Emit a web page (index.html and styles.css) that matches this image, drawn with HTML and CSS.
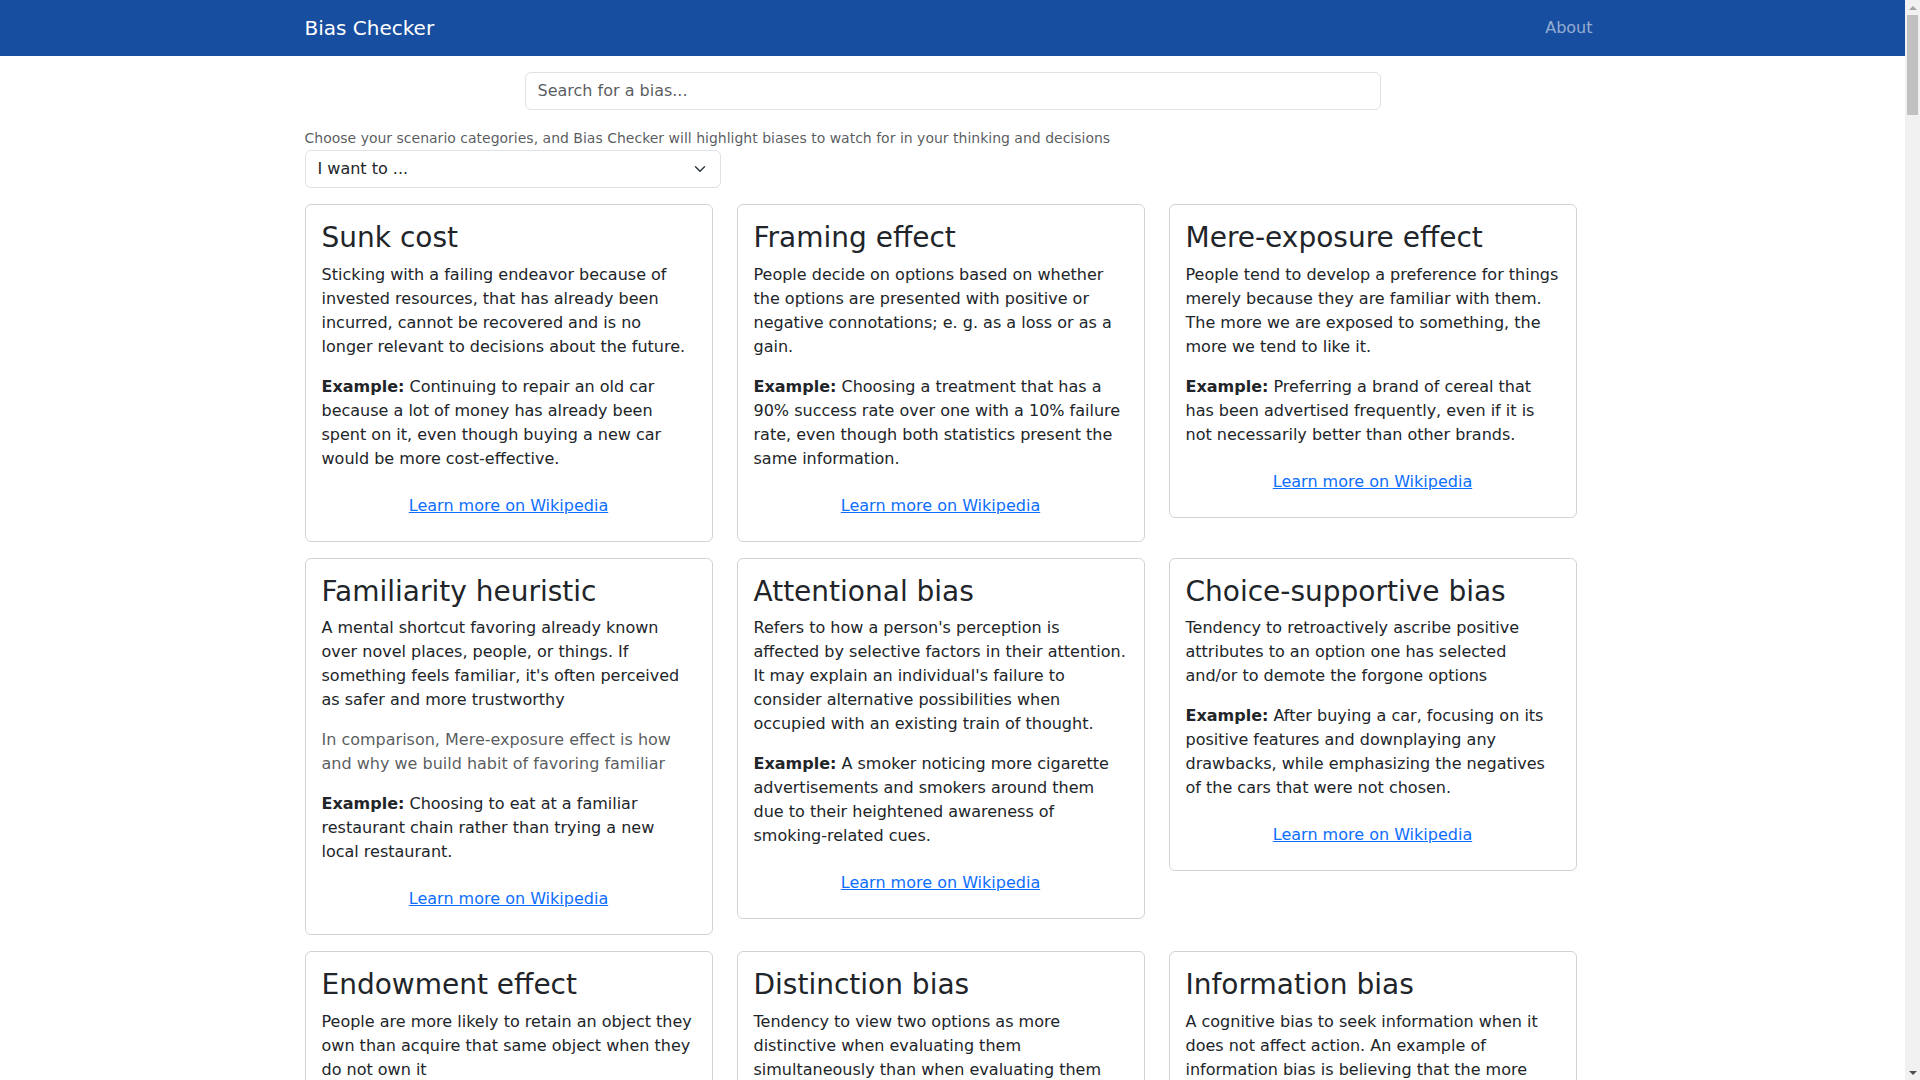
FILE: index.html
```html
<!DOCTYPE html>
<html lang="en">
<head>
  <meta charset="UTF-8">
  <title>Bias Checker</title>
  <link rel="stylesheet" href="styles.css">
</head>
<body>

  <!-- TOP BAR -->
  <nav class="navbar">
    <div class="container navbar-inner">
      <a class="brand" href="#">Bias Checker</a>
      <a class="nav-link" href="#">About</a>
    </div>
  </nav>

  <main class="container">
    <input type="text" class="search" placeholder="Search for a bias...">

    <p class="hint">Choose your scenario categories, and Bias Checker will highlight biases to watch for in your thinking and decisions</p>
    <select class="form-select">
      <option>I want to ...</option>
      <option>make a purchase</option>
      <option>hire someone</option>
      <option>invest money</option>
    </select>

    <!-- BIAS CARDS -->
    <div class="bias-grid">

      <div class="bias-card">
        <h3 class="bias-title">Sunk cost</h3>
        <p>Sticking with a failing endeavor because of invested resources, that has already been incurred, cannot be recovered and is no longer relevant to decisions about the future.</p>
        <p><strong>Example:</strong> Continuing to repair an old car because a lot of money has already been spent on it, even though buying a new car would be more cost-effective.</p>
        <div class="wiki"><a class="btn-link" href="#">Learn more on Wikipedia</a></div>
      </div>

      <div class="bias-card">
        <h3 class="bias-title">Framing effect</h3>
        <p>People decide on options based on whether the options are presented with positive or negative connotations; e. g. as a loss or as a gain.</p>
        <p><strong>Example:</strong> Choosing a treatment that has a 90% success rate over one with a 10% failure rate, even though both statistics present the same information.</p>
        <div class="wiki"><a class="btn-link" href="#">Learn more on Wikipedia</a></div>
      </div>

      <div class="bias-card">
        <h3 class="bias-title">Mere-exposure effect</h3>
        <p>People tend to develop a preference for things merely because they are familiar with them. The more we are exposed to something, the more we tend to like it.</p>
        <p><strong>Example:</strong> Preferring a brand of cereal that has been advertised frequently, even if it is not necessarily better than other brands.</p>
        <div class="wiki"><a class="btn-link" href="#">Learn more on Wikipedia</a></div>
      </div>

      <div class="bias-card">
        <h3 class="bias-title">Familiarity heuristic</h3>
        <p>A mental shortcut favoring already known over novel places, people, or things. If something feels familiar, it's often perceived as safer and more trustworthy</p>
        <p class="note">In comparison, Mere-exposure effect is how and why we build habit of favoring familiar</p>
        <p><strong>Example:</strong> Choosing to eat at a familiar restaurant chain rather than trying a new local restaurant.</p>
        <div class="wiki"><a class="btn-link" href="#">Learn more on Wikipedia</a></div>
      </div>

      <div class="bias-card">
        <h3 class="bias-title">Attentional bias</h3>
        <p>Refers to how a person's perception is affected by selective factors in their attention. It may explain an individual's failure to consider alternative possibilities when occupied with an existing train of thought.</p>
        <p><strong>Example:</strong> A smoker noticing more cigarette advertisements and smokers around them due to their heightened awareness of smoking-related cues.</p>
        <div class="wiki"><a class="btn-link" href="#">Learn more on Wikipedia</a></div>
      </div>

      <div class="bias-card">
        <h3 class="bias-title">Choice-supportive bias</h3>
        <p>Tendency to retroactively ascribe positive attributes to an option one has selected and/or to demote the forgone options</p>
        <p><strong>Example:</strong> After buying a car, focusing on its positive features and downplaying any drawbacks, while emphasizing the negatives of the cars that were not chosen.</p>
        <div class="wiki"><a class="btn-link" href="#">Learn more on Wikipedia</a></div>
      </div>

      <div class="bias-card">
        <h3 class="bias-title">Endowment effect</h3>
        <p>People are more likely to retain an object they own than acquire that same object when they do not own it</p>
        <p><strong>Example:</strong> Refusing to sell a concert ticket for a price higher than one would ever have paid to buy it.</p>
        <div class="wiki"><a class="btn-link" href="#">Learn more on Wikipedia</a></div>
      </div>

      <div class="bias-card">
        <h3 class="bias-title">Distinction bias</h3>
        <p>Tendency to view two options as more distinctive when evaluating them simultaneously than when evaluating them separately.</p>
        <p><strong>Example:</strong> Paying much more for a slightly larger TV after comparing the two side by side in the store.</p>
        <div class="wiki"><a class="btn-link" href="#">Learn more on Wikipedia</a></div>
      </div>

      <div class="bias-card">
        <h3 class="bias-title">Information bias</h3>
        <p>A cognitive bias to seek information when it does not affect action. An example of information bias is believing that the more information that can be acquired to make a decision, the better, even if that extra information is irrelevant for the decision.</p>
        <p><strong>Example:</strong> Ordering more medical tests even though the results will not change the treatment.</p>
        <div class="wiki"><a class="btn-link" href="#">Learn more on Wikipedia</a></div>
      </div>

      <div class="bias-card">
        <h3 class="bias-title">Anchoring bias</h3>
        <p>The tendency to rely too heavily on the first piece of information offered when making decisions.</p>
        <p><strong>Example:</strong> Judging a discounted price as a good deal because of the higher original price shown next to it.</p>
        <div class="wiki"><a class="btn-link" href="#">Learn more on Wikipedia</a></div>
      </div>

      <div class="bias-card">
        <h3 class="bias-title">Confirmation bias</h3>
        <p>The tendency to search for, interpret, favor, and recall information in a way that confirms one's prior beliefs.</p>
        <p><strong>Example:</strong> Only reading reviews that agree with the product one has already decided to buy.</p>
        <div class="wiki"><a class="btn-link" href="#">Learn more on Wikipedia</a></div>
      </div>

      <div class="bias-card">
        <h3 class="bias-title">Loss aversion</h3>
        <p>The perceived disutility of giving up an object is greater than the utility associated with acquiring it.</p>
        <p><strong>Example:</strong> Holding on to a losing stock to avoid realizing the loss.</p>
        <div class="wiki"><a class="btn-link" href="#">Learn more on Wikipedia</a></div>
      </div>

    </div>
  </main>

  <!-- page scroll rail, pinned to the right edge -->
  <div class="scroll-rail" aria-hidden="true">
    <span class="rail-btn rail-up"></span>
    <span class="rail-thumb"></span>
    <span class="rail-btn rail-down"></span>
  </div>

</body>
</html>
```

FILE: styles.css
```css
body {
  margin: 0 15px 0 0;
  font-family: "DejaVu Sans", sans-serif;
  font-size: 16px;
  line-height: 1.5;
  color: #212529;
  background: #fff;
}

.container {
  max-width: 1296px;
  margin: 0 auto;
  padding: 0 12px;
}

/* top bar */
.navbar { background: #174ea0; padding: 8px 0; }
.navbar-inner {
  display: flex;
  align-items: center;
  justify-content: space-between;
}
.brand {
  color: #fff;
  font-size: 20px;
  line-height: 30px;
  padding: 5px 0;
  text-decoration: none;
}
.nav-link {
  color: rgba(255, 255, 255, .55);
  text-decoration: none;
  padding: 8px;
}

/* search + filter */
.search {
  display: block;
  box-sizing: border-box;
  width: 856px;
  margin: 16px auto 0;
  padding: 6px 12px;
  font: inherit;
  line-height: 1.5;
  color: #212529;
  border: 1px solid #dee2e6;
  border-radius: 6px;
  outline: none;
}
.search::placeholder { color: rgba(33, 37, 41, .75); }

.hint {
  margin: 18px 0 1px;
  font-size: 14px;
  line-height: 1.5;
  color: rgba(33, 37, 41, .75);
}

.form-select {
  display: block;
  box-sizing: border-box;
  width: 416px;
  padding: 6px 36px 6px 12px;
  font: inherit;
  line-height: 1.5;
  color: #212529;
  background: #fff url("data:image/svg+xml,%3csvg xmlns='http://www.w3.org/2000/svg' viewBox='0 0 16 16'%3e%3cpath fill='none' stroke='%23343a40' stroke-linecap='round' stroke-linejoin='round' stroke-width='2' d='m2 5 6 6 6-6'/%3e%3c/svg%3e") no-repeat right 12px center / 16px 12px;
  border: 1px solid #dee2e6;
  border-radius: 6px;
  appearance: none;
}

/* cards */
.bias-grid {
  display: grid;
  grid-template-columns: repeat(3, 408px);
  column-gap: 24px;
  row-gap: 16px;
  align-items: start;
  margin: 16px 0;
}
.bias-card {
  border: 1px solid rgba(0, 0, 0, .175);
  border-radius: 6px;
  padding: 16px;
}
.bias-title {
  margin: 0 0 8px;
  font-size: 28px;
  font-weight: 500;
  line-height: 1.2;
}
.bias-card p { margin: 0 0 16px; }
.bias-card .note { color: rgba(33, 37, 41, .75); }

.wiki { text-align: center; }
.btn-link {
  display: inline-block;
  padding: 6px 12px;
  border: 1px solid transparent;
  color: #0d6efd;
  text-decoration: underline;
}

/* scroll rail */
.scroll-rail {
  position: fixed;
  top: 0;
  right: 0;
  bottom: 0;
  width: 15px;
  background: #f1f1f1;
  display: flex;
  flex-direction: column;
}
.rail-btn {
  height: 15px;
  display: flex;
  align-items: center;
  justify-content: center;
}
.rail-btn::before {
  content: "";
  width: 0;
  height: 0;
  border-left: 4px solid transparent;
  border-right: 4px solid transparent;
}
.rail-up::before { border-bottom: 4px solid #a3a3a3; }
.rail-down { margin-top: auto; }
.rail-down::before { border-top: 4px solid #505050; }
.rail-thumb {
  height: 100px;
  margin: 0 2px;
  background: #c1c1c1;
}
```
